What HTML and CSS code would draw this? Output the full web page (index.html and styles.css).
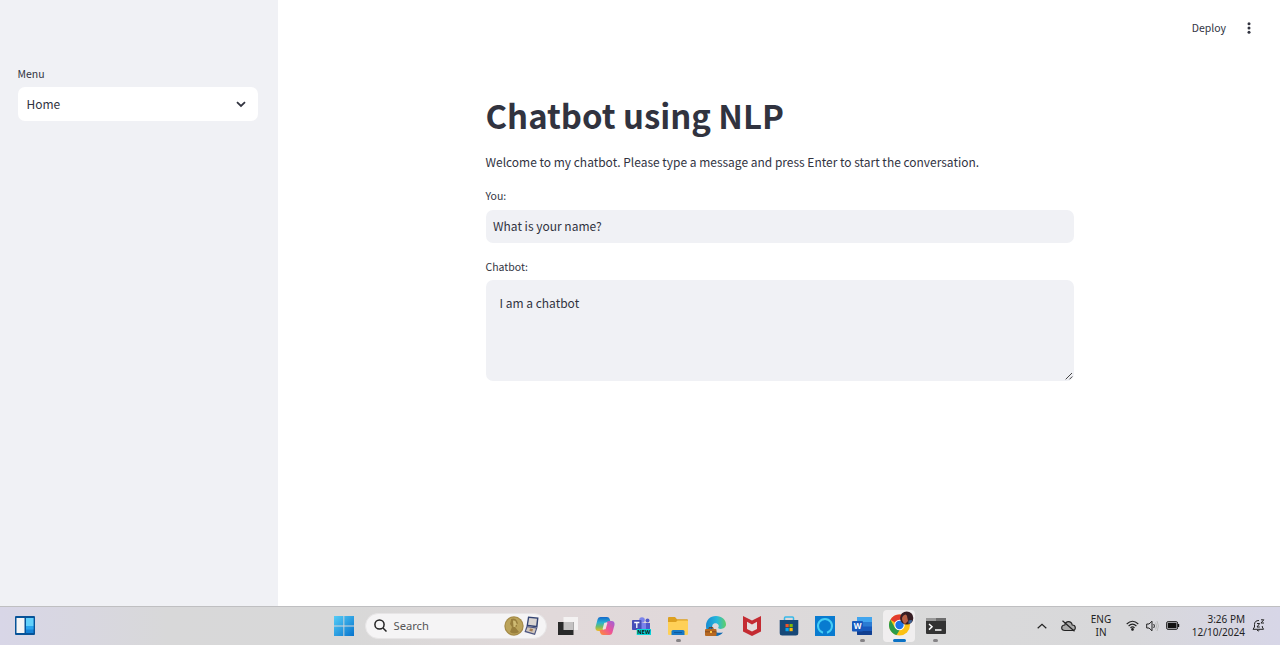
FILE: index.html
```html
<!DOCTYPE html>
<html lang="en">
<head>
<meta charset="utf-8">
<title>Chatbot using NLP</title>
<link rel="stylesheet" href="styles.css">
</head>
<body>
<div class="app">
  <aside class="sidebar">
    <div class="label">Menu</div>
    <div class="select"><span>Home</span>
      <svg width="10" height="7" viewBox="0 0 10 7"><path d="M1 1.2 5 5 9 1.2" fill="none" stroke="#31333f" stroke-width="1.8"/></svg>
    </div>
  </aside>
  <main class="main">
    <header class="toolbar"><span class="deploy">Deploy</span>
      <svg width="4" height="14" viewBox="0 0 4 14" fill="#31333f"><circle cx="2" cy="2.700" r="1.500"/><circle cx="2" cy="7" r="1.500"/><circle cx="2" cy="11.300" r="1.500"/></svg>
    </header>
    <section class="content">
      <h1 class="title">Chatbot using NLP</h1>
      <p class="intro">Welcome to my chatbot. Please type a message and press Enter to start the conversation.</p>
      <div class="label">You:</div>
      <div class="input">What is your name?</div>
      <div class="label">Chatbot:</div>
      <div class="textarea"><span>I am a chatbot</span>
        <svg class="grip" width="8" height="8" viewBox="0 0 8 8"><path d="M.7 7.3 7 1M4.5 7.3 7.3 4.5" stroke="#444" stroke-width="1"/></svg>
      </div>
    </section>
  </main>
</div>
<footer class="taskbar">
  <svg class="widgets" width="20" height="19" viewBox="0 0 20 19"><rect width="20" height="19" rx="1" fill="#075398"/><rect x="1.5" y="2" width="8" height="15" fill="#f5f5f5"/><rect x="11" y="2" width="7.5" height="15" fill="#1683d7"/><path d="M11 2h7.500v8H11z" fill="#63d1fb"/><path d="M11 10h7.500v3.500H11z" fill="#2aa4ed"/></svg>
  <svg class="start" width="20" height="20" viewBox="0 0 20 20"><defs><linearGradient id="win" gradientUnits="userSpaceOnUse" x1="0" y1="0" x2="20" y2="20"><stop stop-color="#55cdf7"/><stop offset="1" stop-color="#0673cd"/></linearGradient></defs><path d="M0 0h9.400v9.500H0zM10.300 0H20v9.500h-9.700zM0 10.500h9.400V20H0zM10.300 10.500H20V20h-9.700z" fill="url(#win)"/></svg>
  <div class="search">
    <svg width="13" height="13" viewBox="0 0 13 13" fill="none" stroke="#222" stroke-width="1.500"><circle cx="5.500" cy="5.500" r="4.600"/><path d="m9 9 3.500 3.500"/></svg>
    <span>Search</span>
    <svg class="medal" width="36" height="22" viewBox="0 0 36 22"><circle cx="10" cy="11" r="9.700" fill="#a58b48"/><circle cx="10" cy="11" r="8.500" fill="#bca45b"/><path d="M7 4q4-1.500 6 2l1 2.500-1 .5v2.500l-2 .5 4 5q-5 3-9 0l2-5-2-3 1-4z" fill="#987e3c"/><path d="M9 5.500q3-.5 3 2l1 2-1.500 1v1.500H9.500z" fill="#cfbb74"/><path d="m24 1.500 10.500 1-1 10L22.500 11z" fill="#344473"/><path d="m25.200 3 7.800.8-.9 7L24 9.800z" fill="#d9d5d2"/><path d="m22.500 11 11 1.500-2.500 7.500-10.500-3z" fill="#4d5681"/><path d="m23.500 12.300 8.500 1.200-1.700 5-8.300-2.400z" fill="#d1c7bd"/><path d="m26 13.500 3 .4-.7 2.600-3-.7z" fill="#a77f55"/></svg>
  </div>
  <nav class="apps">
    <div class="app-icon"><svg width="20" height="20" viewBox="0 0 20 20"><path d="M5.500 1H20v13H5.500z" fill="#f4f2f2"/><path d="M0 6h15.500v13H0z" fill="#292929"/><path d="M5.500 6h10v8h-10z" fill="#c4c2c2"/></svg></div>
    <div class="app-icon"><svg width="20" height="20" viewBox="0 0 20 20"><defs><linearGradient id="cl" x1="0" y1="0" x2="0" y2="1"><stop stop-color="#1467cb"/><stop offset=".4" stop-color="#27b1d2"/><stop offset=".7" stop-color="#72bd66"/><stop offset="1" stop-color="#f0bd21"/></linearGradient><linearGradient id="cr" x1="1" y1="0" x2="0" y2="1"><stop stop-color="#9b62dc"/><stop offset=".5" stop-color="#ed5397"/><stop offset="1" stop-color="#ff922f"/></linearGradient></defs><path d="M5.500 1h6.500q2 0 2.700 2l.9 3h-3.200Q10.500 6 10 8l-1.500 5Q8 15 6 15H3.500Q0 15 .5 11L2.700 3Q3.300 1 5.500 1z" fill="url(#cl)"/><path d="M14.500 19H8q-2 0-2.700-2l-.9-3h3.200q1.900 0 2.400-2l1.500-5q.5-2 2.500-2h2.500q3.500 0 3 4l-2.200 8q-.6 2-2.800 2z" fill="url(#cr)"/><path d="M9.300 6.800h3.200l-1.900 6.400H7.500z" fill="#ede1df"/></svg></div>
    <div class="app-icon"><svg width="20" height="20" viewBox="0 0 20 20"><circle cx="11" cy="4" r="2.800" fill="#7b83eb"/><circle cx="16.500" cy="4.500" r="2" fill="#5059c9"/><path d="M13 7h6v7h-6z" fill="#5059c9"/><path d="M6 7h9v9H6z" fill="#7b83eb"/><rect x="1" y="4" width="9.500" height="10" rx=".8" fill="#464eb8"/><path d="M3.200 6.500h5.200M5.800 6.500V12" stroke="#fff" stroke-width="1.300"/><path d="M5.700 13H20v6H5.700z" fill="#07d6d9"/><text x="12.800" y="18" class="new-tag">NEW</text></svg></div>
    <div class="app-icon running"><svg width="20" height="20" viewBox="0 0 20 20"><path d="M0 2q0-1 1-1h6l2 2.200h10q1 0 1 1V10H0z" fill="#dda020"/><path d="M0 6h8l1.500-1.500H20V18q0 1-1 1H1q-1 0-1-1z" fill="#ffd057"/><path d="M3.500 19v-3.500q0-1.500 1.500-1.500h10q1.500 0 1.500 1.500V19z" fill="#1778c5"/><path d="M6 16.500h8" stroke="#0e5a9d"/></svg></div>
    <div class="app-icon"><svg width="21" height="20" viewBox="0 0 21 20"><defs><linearGradient id="edge"><stop stop-color="#168ad2"/><stop offset=".55" stop-color="#26b8dc"/><stop offset="1" stop-color="#62cf64"/></linearGradient></defs><path d="M1 10C1 4 5 0 11 0c6 0 10 4 10 8.500 0 4-5.500 5.500-8 3.500.8-1 1-2 .5-3-1.200-2.500-5-2.500-6 0C6 13 9 18 17 17c-2 2-4 3-6.500 3C5 20 1 16 1 10z" fill="url(#edge)"/><path d="M7 9.500c-1 5 3.500 8.500 11 7-2 2.300-4.500 3.500-7.500 3.500C6 19 4 13 7 9.500z" fill="#1269b5"/><rect y="13" width="11.500" height="7" rx="1" fill="#b76822"/><path d="M4 13v-1.300h4V13" fill="none" stroke="#6b3b18"/><path d="M0 15.800h11.500" stroke="#71401c" stroke-width=".7"/><path d="M5 15h2v2H5z" fill="#ffc642"/></svg></div>
    <div class="app-icon"><svg width="18" height="20" viewBox="0 0 18 20"><path d="m0 0 9 4.500L18 0v15.500L9 20l-9-4.500z" fill="#c42b32"/><path d="m4 5.800 5 2.600 5-2.600v7.300l-5 2.500-5-2.500z" fill="#e4dcdc"/></svg></div>
    <div class="app-icon"><svg width="20" height="20" viewBox="0 0 20 20"><path d="M5.500 5V2q0-1 1-1h7q1 0 1 1v3" fill="none" stroke="#37b9e9" stroke-width="1.500"/><path d="M.7 4h18.600v13q0 2.500-2.500 2.500H3.200Q.7 19.500.7 17z" fill="#174878"/><path d="M6.500 8h3.200v3.200H6.500z" fill="#f35325"/><path d="M10.500 8h3.200v3.200h-3.200z" fill="#81bc06"/><path d="M6.500 12h3.200v3.200H6.500z" fill="#05a6f0"/><path d="M10.500 12h3.200v3.200h-3.200z" fill="#ffba08"/></svg></div>
    <div class="app-icon"><svg width="20" height="20" viewBox="0 0 20 20"><path d="M0 0h20v20H0z" fill="#087bd0"/><path d="M8 16.700A7 7 0 1 1 12 16.700" fill="none" stroke="#45cdf5" stroke-width="2"/></svg></div>
    <div class="app-icon running"><svg width="20" height="20" viewBox="0 0 20 20"><rect x="5" y="1" width="15" height="18" rx="1" fill="#185abd"/><path d="M5 1h15v5H5z" fill="#41a5ee"/><path d="M5 6h15v4.500H5z" fill="#2b7cd3"/><path d="M5 15h15v3.200q0 .8-1 .8H6q-1 0-1-1z" fill="#103f91"/><rect y="5" width="11" height="10.500" rx="1" fill="#185abd"/><text x="5.500" y="13.300" class="word-mark">W</text></svg></div>
    <div class="app-icon active"><svg width="26" height="26" viewBox="0 0 26 26"><circle cx="11.500" cy="15" r="10.500" fill="#fbc116"/><path d="M11.500 15 2.400 9.750a10.500 10.500 0 0 1 18.200 0H11.500z" fill="#e33b2e"/><path d="M2.400 9.750 7 17.700l4.500 2.500-3 4.900A10.500 10.500 0 0 1 2.400 9.750z" fill="#2a9b49"/><circle cx="11.500" cy="15" r="5.200" fill="#fff"/><circle cx="11.500" cy="15" r="4.200" fill="#1c73e8"/><circle cx="18.700" cy="8" r="6.600" fill="#371e24"/><path d="M15 6q3-3 4 0l1 5-3 3q-3-2-3-6z" fill="#b96146"/><path d="M20.500 10.500q3-1 4 0-1 3-4 3.500z" fill="#3e6294"/></svg></div>
    <div class="app-icon running"><svg width="20" height="20" viewBox="0 0 20 20"><path d="M0 2h20v15q0 1-1 1H1q-1 0-1-1z" fill="#333"/><path d="M0 2h10v3H0z" fill="#999"/><path d="M10 2h10v3H10z" fill="#6d6d6d"/><path d="m3 8 3 2.800-3 2.800M9 14h6.500" fill="none" stroke="#fff" stroke-width="1.500"/></svg></div>
  </nav>
  <div class="tray">
    <svg class="chev" width="10" height="6" viewBox="0 0 10 6"><path d="m.7 5.300 4.300-4 4.300 4" fill="none" stroke="#222" stroke-width="1.200"/></svg>
    <svg class="cloud" width="15" height="12" viewBox="0 0 15 12" fill="none" stroke="#222" stroke-width="1.200"><path d="M4 10.500q-3.300 0-3.300-2.700T3.800 5Q4.500 1.700 7.500 1.700T11.200 5q3.100 0 3.100 2.800T11 10.500z" fill="#aaa"/><path d="m1.500.7 12 10.500"/></svg>
    <div class="lang">ENG<br>IN</div>
    <svg class="wifi" width="13" height="11" viewBox="0 0 13 11" fill="none" stroke="#222" stroke-width="1.100"><path d="M.7 4Q6.500-1.500 12.300 4M2.600 6Q6.500 2.200 10.400 6M4.400 7.800q2.100-2 4.200 0"/><circle cx="6.500" cy="9.400" r=".8" fill="#222"/></svg>
    <svg class="sound" width="13" height="12" viewBox="0 0 13 12" fill="none" stroke="#222"><path d="M.7 4H3l3-2.800v9.600L3 8H.7z"/><path d="M7.700 4q1.500 2 0 4"/><path d="M9.500 2.500q2.500 3.500 0 7M11 1q3 5 0 10" stroke="#bbb"/></svg>
    <svg class="battery" width="14" height="9" viewBox="0 0 14 9"><rect x=".6" y=".6" width="11" height="7.800" rx="1.500" fill="none" stroke="#222"/><path d="M1.700 1.700h8.800v5.600H1.700zM12 3h1.200v3H12z" fill="#111"/></svg>
    <div class="clock">3:26 PM<br>12/10/2024</div>
    <svg class="bell" width="13" height="13" viewBox="0 0 13 13" fill="none" stroke="#222"><path d="M7 1.500Q2.500 1.500 2.500 5.500V8L1 10.300h10.500L10.300 8V7M5 11q1.200 2 2.500 0"/><path d="M5 4.500h2.700L5 8h2.800M9 .8h2.800L9 4h3"/></svg>
  </div>
</footer>
</body>
</html>
```
FILE: styles.css
```css
* { box-sizing: border-box; }
body {
  margin: 0;
  height: 645px;
  display: flex;
  flex-direction: column;
  overflow: hidden;
  background: #fff;
  color: #31333f;
  font: 12px/20px "Noto Sans CJK SC", "Noto Sans", sans-serif;
}
svg { display: block; flex: none; }
.app { display: flex; height: 606px; }
.sidebar { width: 278px; background: #f0f1f5; padding: 65px 20px 0 17.500px; }
.label { font-size: 10.500px; line-height: 17px; height: 22px; }
.select {
  height: 34px;
  padding: 0 12px 0 9px;
  display: flex;
  align-items: center;
  justify-content: space-between;
  background: #fff;
  border-radius: 7px;
}
.main { flex: 1; }
.toolbar {
  height: 56px;
  padding-right: 29px;
  display: flex;
  align-items: center;
  justify-content: flex-end;
  gap: 21px;
}
.deploy { font-size: 10.500px; }
.content { width: 588.500px; margin-left: 207.500px; padding-top: 34px; }
.title { margin: 0 0 12px; font-size: 32.900px; line-height: 50px; font-weight: 700; white-space: nowrap; }
.intro { margin: 0 0 15px; font-size: 11.980px; white-space: nowrap; }
.input, .textarea { background: #f0f1f5; border-radius: 7px; }
.input { height: 33px; margin: 1px 0 15px; padding: 0 7.500px; line-height: 32px; }
.textarea { position: relative; height: 101px; padding: 13px 14px; }
.grip { position: absolute; right: 1px; bottom: 1px; }

.taskbar {
  height: 39px;
  padding-bottom: 1px;
  display: flex;
  align-items: center;
  border-top: 1px solid #bfbfc1;
  background: linear-gradient(90deg, #d8d6e7 0, #d8d8d9 13%, #d8d8d8 27%, #e1d9da 43%, #e0d8da 55%, #dadada 68%, #d8d8da 88%, #d7d6e7 100%);
  color: #222;
  font: 10px/13px "Noto Sans", sans-serif;
}
.widgets { margin: 0 298.500px 0 15px; }
.start { margin-right: 11px; }
.search {
  width: 182px;
  height: 26px;
  margin-right: 3px;
  padding: 0 6px 0 8px;
  display: flex;
  align-items: center;
  gap: 7px;
  border: 1px solid #e7e5e6;
  border-radius: 13px;
  background: #f5f4f5;
  color: #555;
  font-size: 11.200px;
}
.medal { margin-left: auto; }
.apps { display: flex; height: 37px; }
.app-icon {
  position: relative;
  width: 36.800px;
  height: 37px;
  display: flex;
  align-items: center;
  justify-content: center;
}
.running::after, .active::after {
  content: "";
  position: absolute;
  left: 16px;
  bottom: 2px;
  width: 5px;
  height: 3px;
  border-radius: 2px;
  background: #858386;
}
.active::before {
  content: "";
  position: absolute;
  left: 2px;
  top: 3px;
  width: 32px;
  height: 32px;
  border-radius: 4px;
  background: #f0eeef;
}
.active::after { left: 12px; width: 13px; background: #0b72c5; }
.active svg { position: relative; top: -3px; left: 2px; }
.new-tag { font: 700 5.500px "Noto Sans", sans-serif; text-anchor: middle; fill: #111; }
.word-mark { font: 700 8px "Noto Sans", sans-serif; text-anchor: middle; fill: #fff; }
.tray { flex: 1; display: flex; align-items: center; justify-content: flex-end; padding-right: 15.500px; }
.chev { margin-right: 14px; }
.cloud { margin-right: 14px; }
.lang { width: 22px; text-align: center; margin-right: 14px; }
.wifi { margin-right: 6.500px; }
.sound { margin-right: 7.500px; }
.battery { margin-right: 7px; }
.clock { width: 58px; text-align: right; white-space: nowrap; margin-right: 6.500px; }
```
